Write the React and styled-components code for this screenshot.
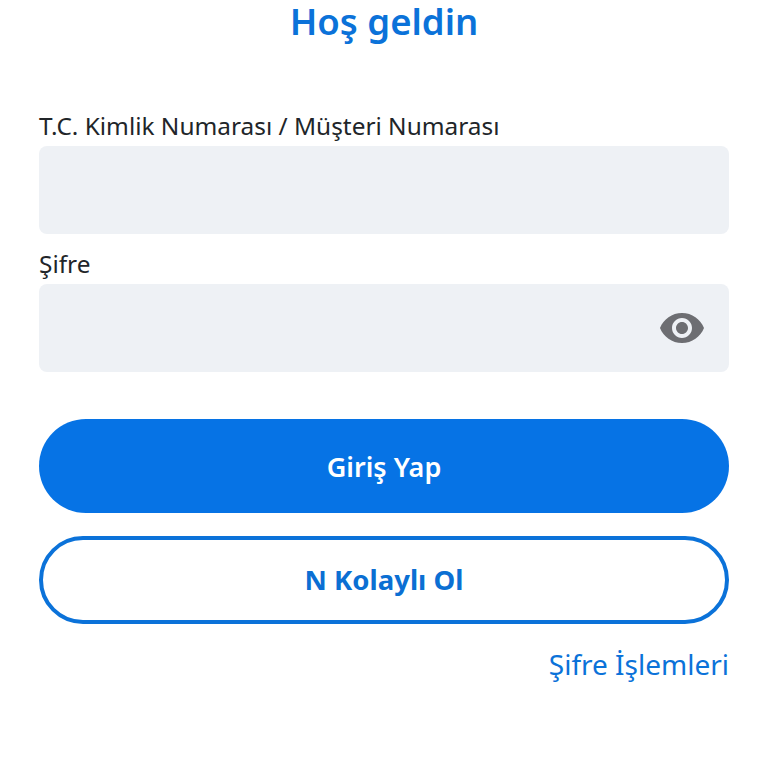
import styled, { createGlobalStyle } from "styled-components";

const GlobalStyle = createGlobalStyle`
  html, body {
    margin: 0;
    padding: 0;
    background: #fff;
    overflow: hidden;
  }
  * {
    box-sizing: border-box;
  }
`;

const Page = styled.form`
  width: 768px;
  height: 768px;
  padding: 0 39px;
  display: flex;
  flex-direction: column;
  font-family: "Noto Sans", "Open Sans", sans-serif;
`;

const Title = styled.h1`
  margin: 0 0 66px;
  height: 45px;
  line-height: 43px;
  text-align: center;
  font-size: 36.5px;
  font-weight: 600;
  color: #0b72d9;
`;

const Field = styled.div`
  display: flex;
  flex-direction: column;
  margin-bottom: 15.5px;
`;

const Label = styled.label`
  height: 35px;
  line-height: 30px;
  font-size: 24.4px;
  color: #212529;
`;

const InputBox = styled.div`
  height: 87.5px;
  padding-right: 24px;
  display: flex;
  align-items: center;
  justify-content: flex-end;
  border-radius: 8px;
  background: #eef1f5;
`;

const Eye = styled.svg`
  width: 48px;
  height: 48px;
  fill: #6d6e72;
  margin-right: -1px;
`;

const PrimaryButton = styled.button`
  height: 94px;
  margin-top: 32px;
  border: none;
  border-radius: 47px;
  background: #0673e5;
  color: #fff;
  font: 600 27px "Noto Sans", "Open Sans", sans-serif;
  padding-bottom: 0;
`;

const OutlineButton = styled.button`
  height: 88px;
  margin-top: 23px;
  border: 4px solid #0b72d9;
  border-radius: 44px;
  background: #fff;
  color: #0b6fd3;
  font: 700 27.5px "Noto Sans", "Open Sans", sans-serif;
  padding-bottom: 2px;
`;

const PasswordLink = styled.a`
  margin-top: 22px;
  align-self: flex-end;
  line-height: 37px;
  font-size: 28px;
  color: #0b72d9;
`;

export default function App() {
  return (
    <>
      <GlobalStyle />
      <Page>
        <Title>Hoş geldin</Title>
        <Field>
          <Label>T.C. Kimlik Numarası / Müşteri Numarası</Label>
          <InputBox />
        </Field>
        <Field>
          <Label>Şifre</Label>
          <InputBox>
            <Eye viewBox="0 0 24 24">
              <path d="M12 4.5C7 4.5 2.73 7.61 1 12c1.73 4.39 6 7.5 11 7.5s9.27-3.11 11-7.5c-1.73-4.39-6-7.5-11-7.5zM12 17c-2.76 0-5-2.24-5-5s2.24-5 5-5 5 2.24 5 5-2.24 5-5 5zm0-8c-1.66 0-3 1.34-3 3s1.34 3 3 3 3-1.34 3-3-1.34-3-3-3z" />
            </Eye>
          </InputBox>
        </Field>
        <PrimaryButton type="button">Giriş Yap</PrimaryButton>
        <OutlineButton type="button">N Kolaylı Ol</OutlineButton>
        <PasswordLink>Şifre İşlemleri</PasswordLink>
      </Page>
    </>
  );
}
